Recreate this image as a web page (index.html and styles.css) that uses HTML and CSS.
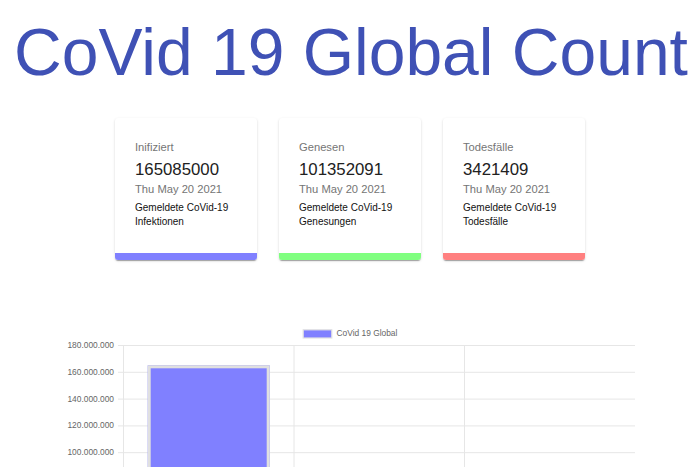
FILE: index.html
```html
<!DOCTYPE html>
<html lang="de">
<head>
<meta charset="utf-8">
<title>CoVid 19 Global Count</title>
<link rel="stylesheet" href="styles.css">
</head>
<body>
<h1 class="title">CoVid 19 Global Count</h1>
<div class="cards">
  <div class="card">
    <div class="card-content">
      <div class="card-label">Inifiziert</div>
      <div class="card-number">165085000</div>
      <div class="card-date">Thu May 20 2021</div>
      <div class="card-desc">Gemeldete CoVid-19 Infektionen</div>
    </div>
    <div class="card-bar bar-blue"></div>
  </div>
  <div class="card">
    <div class="card-content">
      <div class="card-label">Genesen</div>
      <div class="card-number">101352091</div>
      <div class="card-date">Thu May 20 2021</div>
      <div class="card-desc">Gemeldete CoVid-19 Genesungen</div>
    </div>
    <div class="card-bar bar-green"></div>
  </div>
  <div class="card">
    <div class="card-content">
      <div class="card-label">Todesfälle</div>
      <div class="card-number">3421409</div>
      <div class="card-date">Thu May 20 2021</div>
      <div class="card-desc">Gemeldete CoVid-19 Todesfälle</div>
    </div>
    <div class="card-bar bar-red"></div>
  </div>
</div>
<div class="chart">
  <svg class="chart-svg" width="700" height="147" viewBox="0 0 700 147" xmlns="http://www.w3.org/2000/svg">
    <!-- legend -->
    <rect x="303.2" y="9.8" width="28.6" height="8.2" fill="#8080ff" stroke="#e2e2e2" stroke-width="1.2"/>
    <text class="chart-text" x="336.5" y="13.9" dominant-baseline="middle">CoVid 19 Global</text>
    <!-- grid -->
    <g stroke="#e6e6e6" stroke-width="1">
      <line x1="118" y1="25.5" x2="635" y2="25.5"/>
      <line x1="118" y1="52.3" x2="635" y2="52.3"/>
      <line x1="118" y1="79.1" x2="635" y2="79.1"/>
      <line x1="118" y1="105.9" x2="635" y2="105.9"/>
      <line x1="118" y1="132.7" x2="635" y2="132.7"/>
      <line x1="123.5" y1="25" x2="123.5" y2="147"/>
      <line x1="294" y1="25" x2="294" y2="147"/>
      <line x1="464.5" y1="25" x2="464.5" y2="147"/>
    </g>
    <!-- y labels -->
    <g class="chart-text" text-anchor="end">
      <text x="114" y="25.8" dominant-baseline="middle">180.000.000</text>
      <text x="114" y="52.6" dominant-baseline="middle">160.000.000</text>
      <text x="114" y="79.4" dominant-baseline="middle">140.000.000</text>
      <text x="114" y="106.2" dominant-baseline="middle">120.000.000</text>
      <text x="114" y="133" dominant-baseline="middle">100.000.000</text>
    </g>
    <!-- bar -->
    <rect x="147.7" y="45.3" width="122" height="110" fill="#8080ff"/>
    <rect x="149.2" y="46.8" width="119" height="110" fill="none" stroke="#e0e0e0" stroke-width="3"/>
  </svg>
</div>
</body>
</html>
```

FILE: styles.css
```css
html, body {
  margin: 0;
  padding: 0;
  background: #ffffff;
}

body {
  font-family: "Liberation Sans", Arial, sans-serif;
}

.title {
  margin: 0;
  padding: 14px 0 0 2px;
  font-family: "Liberation Sans", Arial, sans-serif;
  font-weight: 400;
  font-size: 66px;
  line-height: 76px;
  color: #3f51b5;
  text-align: center;
  white-space: nowrap;
}

.cards {
  display: flex;
  justify-content: center;
  gap: 22px;
  margin-top: 28px;
}

.card {
  width: 142px;
  background: #ffffff;
  border-radius: 3px;
  box-shadow: 0 2px 1px -1px rgba(0,0,0,0.2), 0 1px 1px 0 rgba(0,0,0,0.14), 0 1px 3px 0 rgba(0,0,0,0.12);
  overflow: hidden;
  display: flex;
  flex-direction: column;
}

.card-content {
  padding: 20.6px 20px 23.7px 20px;
}

.card-label {
  font-size: 11.2px;
  line-height: 16.8px;
  color: #757575;
}

.card-number {
  margin-top: 3.6px;
  font-size: 16.8px;
  line-height: 22.4px;
  color: #212121;
}

.card-date {
  font-size: 11.2px;
  line-height: 16.8px;
  color: #757575;
}

.card-desc {
  margin-top: 3px;
  font-size: 10px;
  line-height: 14px;
  color: #111111;
}

.card-bar {
  height: 7px;
}

.bar-blue { background: #8080ff; }
.bar-green { background: #80ff80; }
.bar-red { background: #ff8080; }

.chart {
  margin-top: 60px;
}

.chart-svg {
  display: block;
}

.chart-text {
  font-family: "Liberation Sans", Arial, sans-serif;
  font-size: 8.4px;
  fill: #666666;
}
```
